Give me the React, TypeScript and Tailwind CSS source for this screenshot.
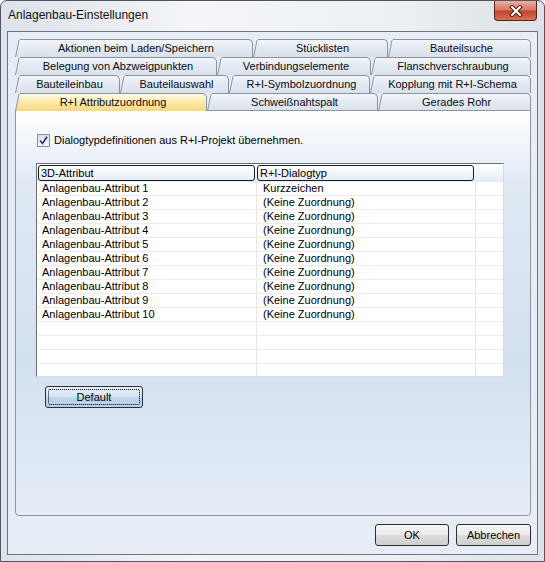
// Windows 7 style settings dialog: multi-row tab strip, attribute mapping grid,
// Default / OK / Abbrechen buttons.

type TabDef = { label: string; w: string; selected?: boolean };

const TAB_ROWS: TabDef[][] = [
  [
    { label: "Aktionen beim Laden/Speichern", w: "w-[238px]" },
    { label: "Stücklisten", w: "w-[135px]" },
    { label: "Bauteilsuche", w: "w-[143px]" },
  ],
  [
    { label: "Belegung von Abzweigpunkten", w: "w-[202px]" },
    { label: "Verbindungselemente", w: "w-[154px]" },
    { label: "Flanschverschraubung", w: "w-[160px]" },
  ],
  [
    { label: "Bauteileinbau", w: "w-[105px]" },
    { label: "Bauteilauswahl", w: "w-[109px]" },
    { label: "R+I-Symbolzuordnung", w: "w-[141px]" },
    { label: "Kopplung mit R+I-Schema", w: "w-[161px]" },
  ],
  [
    { label: "R+I Attributzuordnung", w: "w-[192px]", selected: true },
    { label: "Schweißnahtspalt", w: "w-[171px]" },
    { label: "Gerades Rohr", w: "w-[153px]" },
  ],
];

const ROWS: [string, string][] = [
  ["Anlagenbau-Attribut 1", "Kurzzeichen"],
  ["Anlagenbau-Attribut 2", "(Keine Zuordnung)"],
  ["Anlagenbau-Attribut 3", "(Keine Zuordnung)"],
  ["Anlagenbau-Attribut 4", "(Keine Zuordnung)"],
  ["Anlagenbau-Attribut 5", "(Keine Zuordnung)"],
  ["Anlagenbau-Attribut 6", "(Keine Zuordnung)"],
  ["Anlagenbau-Attribut 7", "(Keine Zuordnung)"],
  ["Anlagenbau-Attribut 8", "(Keine Zuordnung)"],
  ["Anlagenbau-Attribut 9", "(Keine Zuordnung)"],
  ["Anlagenbau-Attribut 10", "(Keine Zuordnung)"],
  ["", ""],
  ["", ""],
  ["", ""],
  ["", ""],
];

function Tab({ tab }: { tab: TabDef }) {
  const sel = tab.selected;
  return (
    <div className={`flex h-[18px] shrink-0 ${tab.w} ${sel ? "relative z-10" : ""}`}>
      {/* slanted left edge */}
      <svg width="5" height="18" className="shrink-0">
        <defs>
          <linearGradient id={sel ? "tabSel" : "tabNorm"} x1="0" y1="0" x2="0" y2="1">
            <stop offset="0" stopColor={sel ? "#fffbe9" : "#f3f6fa"} />
            <stop offset="1" stopColor={sel ? "#fbd77c" : "#d9e1eb"} />
          </linearGradient>
        </defs>
        <polygon points="0.5,18 4,1 5,0.5 5,18" fill={`url(#${sel ? "tabSel" : "tabNorm"})`} />
        <polyline points="0.5,18 4,1.5 5,0.5" fill="none" stroke="#8b939c" strokeWidth="1" />
      </svg>
      <div
        className={`flex flex-1 items-center justify-center rounded-tr-[5px] border-t border-r border-[#8b939c] pb-px ${
          sel
            ? "bg-[linear-gradient(to_bottom,#fffbe9,#fde9ab_50%,#fbd77c)]"
            : "bg-[linear-gradient(to_bottom,#f3f6fa,#e3e9f1_50%,#d9e1eb)]"
        }`}
      >
        <span className="whitespace-nowrap text-[#0a0a14]">{tab.label}</span>
      </div>
    </div>
  );
}

function WinButton({ label, w, focused }: { label: string; w: string; focused?: boolean }) {
  return (
    <div
      className={`flex h-[22px] ${w} items-center justify-center rounded-[3px] border border-[#2f2f2f] p-[2px] ${
        focused
          ? "bg-[linear-gradient(to_bottom,#e6f0fb,#d5e5f6_48%,#bfd5ee_52%,#b7cfea)]"
          : "bg-[linear-gradient(to_bottom,#f5f5f5,#ececec_48%,#dcdcdc_52%,#cfcfcf)]"
      }`}
    >
      <div
        className={`flex h-full w-full items-center justify-center rounded-[2px] ${
          focused ? "border border-dotted border-black" : ""
        }`}
      >
        {label}
      </div>
    </div>
  );
}

export default function App() {
  return (
    <div className="h-[562px] w-[545px] bg-white font-['Liberation_Sans',Arial,sans-serif] text-[11px] text-black">
      <div className="flex h-full w-full flex-col rounded-t-[7px] border border-[#4f565d] bg-[linear-gradient(to_right,#dde3ea,#f3f5f8_35%,#eef1f4_70%,#dde2e8)]">
        {/* title bar */}
        <div className="flex h-[30px] shrink-0 items-start justify-between">
          <span className="pl-[7px] pt-[6px] text-[12px] leading-[16px] text-[#111]">
            Anlagenbau-Einstellungen
          </span>
          <div className="mr-[7px] flex h-[20px] w-[43px] items-center justify-center rounded-b-[4px] border border-t-0 border-[#5a2018] bg-[linear-gradient(to_bottom,#eab1a3,#d97a64_45%,#c2442c_55%,#d77259)]">
            <svg width="14" height="12" viewBox="0 0 14 12">
              <path d="M3 2 L11 10 M11 2 L3 10" stroke="#4a1a12" strokeWidth="4" strokeLinecap="square" />
              <path d="M3 2 L11 10 M11 2 L3 10" stroke="#ffffff" strokeWidth="2" strokeLinecap="square" />
            </svg>
          </div>
        </div>

        {/* client area */}
        <div className="mx-[6px] flex h-[524px] shrink-0 flex-col border border-[#6f757c] bg-[#e6edf6] pl-[7px] pr-[6px] pt-[7px]">
          {TAB_ROWS.map((row, i) => (
            <div key={i} className="flex">
              {row.map((t) => (
                <Tab key={t.label} tab={t} />
              ))}
            </div>
          ))}

          {/* tab page */}
          <div className="relative -mt-px flex h-[406px] w-[516px] flex-col rounded-b-[4px] border border-[#8b96a2] bg-[linear-gradient(to_bottom,#ffffff_0%,#e0e9f4_18%,#d3e0f0_62%,#e5edf7_100%)] pl-[20px] pt-[23px]">
            <div className="flex h-[13px] items-center gap-[4px] pl-px leading-[13px]">
              <div className="flex h-[13px] w-[13px] items-center justify-center border border-[#8e8f8f] bg-[linear-gradient(to_bottom,#dcdee2,#f6f7f8)]">
                <svg width="9" height="9" viewBox="0 0 9 9">
                  <path d="M1 4.5 L3.5 7.5 L8 0.8" fill="none" stroke="#1f3386" strokeWidth="1.6" />
                </svg>
              </div>
              <span>Dialogtypdefinitionen aus R+I-Projekt übernehmen.</span>
            </div>

            {/* grid */}
            <div className="mt-[16px] flex h-[214px] w-[468px] flex-col overflow-hidden border border-t-[#6b6f75] border-l-[#6b6f75] border-r-[#dcdcdc] border-b-[#dcdcdc] bg-white">
              <div className="flex h-[18px] shrink-0 bg-[linear-gradient(to_bottom,#ffffff,#f2f5f9_50%,#e3eaf3)]">
                <div className="w-[220px] py-px pl-px pr-[2px]">
                  <div className="flex h-full items-center rounded-[3px] border border-[#1c1c1c] pl-[2px]">
                    3D-Attribut
                  </div>
                </div>
                <div className="w-[219px] py-px pr-[2px]">
                  <div className="flex h-full items-center rounded-[3px] border border-[#1c1c1c] pl-[2px]">
                    R+I-Dialogtyp
                  </div>
                </div>
                <div className="flex-1" />
              </div>
              {ROWS.map(([a, b], i) => (
                <div key={i} className="flex h-[14px] shrink-0 border-b border-[#ececec]">
                  <div className="flex w-[220px] items-center border-r border-[#e6e6e6] pl-[5px] leading-none">
                    {a}
                  </div>
                  <div className="flex w-[219px] items-center border-r border-[#e6e6e6] pl-[6px] leading-none">
                    {b}
                  </div>
                  <div className="flex-1" />
                </div>
              ))}
            </div>

            <div className="ml-[9px] mt-[9px]">
              <WinButton label="Default" w="w-[98px]" focused />
            </div>
          </div>

          {/* dialog buttons */}
          <div className="mt-[8px] flex w-[516px] justify-end gap-[7px]">
            <WinButton label="OK" w="w-[74px]" />
            <WinButton label="Abbrechen" w="w-[75px]" />
          </div>
        </div>
      </div>
    </div>
  );
}
